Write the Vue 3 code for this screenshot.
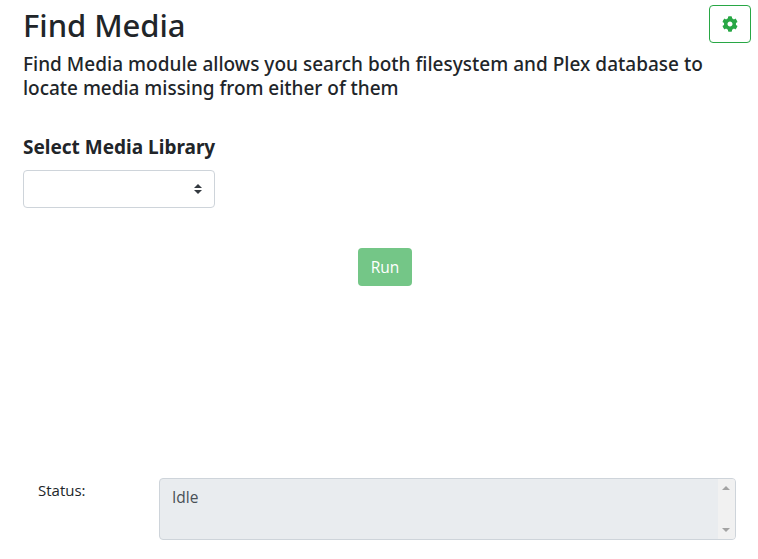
<script setup>
import { ref } from 'vue'
const library = ref('')
const status = ref('Idle')
</script>

<template>
  <main class="page">
    <header class="header">
      <div class="intro">
        <h2>Find Media</h2>
        <h5>Find Media module allows you search both filesystem and Plex database to <span class="ending">locate media missing from either of them</span></h5>
      </div>
      <button class="settings" type="button" aria-label="Settings">
        <svg viewBox="0 0 512 512" width="16" height="16"><path fill="currentColor" d="M487.4 315.7l-42.6-24.6c4.3-23.2 4.3-47 0-70.2l42.6-24.6c4.9-2.8 7.1-8.6 5.5-14-11.1-35.6-30-67.8-54.7-94.6-3.8-4.1-10-5.1-14.8-2.3L380.8 110c-17.9-15.4-38.5-27.3-60.8-35.1V25.8c0-5.6-3.9-10.5-9.4-11.7-36.7-8.2-74.3-7.8-109.2 0-5.5 1.2-9.4 6.1-9.4 11.7V75c-22.2 7.9-42.8 19.8-60.8 35.1L88.7 85.5c-4.9-2.8-11-1.9-14.8 2.3-24.7 26.7-43.6 58.9-54.7 94.6-1.7 5.4.6 11.2 5.5 14L67.3 221c-4.3 23.2-4.3 47 0 70.2l-42.6 24.6c-4.9 2.8-7.1 8.6-5.5 14 11.1 35.6 30 67.8 54.7 94.6 3.8 4.1 10 5.1 14.8 2.3l42.6-24.6c17.9 15.4 38.5 27.3 60.8 35.1v49.2c0 5.6 3.9 10.5 9.4 11.7 36.7 8.2 74.3 7.8 109.2 0 5.5-1.2 9.4-6.1 9.4-11.7v-49.2c22.2-7.9 42.8-19.8 60.8-35.1l42.6 24.6c4.9 2.8 11 1.9 14.8-2.3 24.7-26.7 43.6-58.9 54.7-94.6 1.5-5.5-.7-11.3-5.6-14.1zM256 336c-44.1 0-80-35.9-80-80s35.9-80 80-80 80 35.900 80 80-35.900 80-80 80z"/></svg>
      </button>
    </header>

    <section class="library">
      <label for="library">Select Media Library</label>
      <div class="select-wrap">
        <select id="library" v-model="library"></select>
        <svg class="caret" viewBox="0 0 4 5" width="8" height="10"><path fill="#343a40" d="M2 0L0 2h4zm0 5L0 3h4z"/></svg>
      </div>
    </section>

    <div class="actions"><button class="run" type="button" disabled>Run</button></div>

    <footer class="status-row">
      <span class="status-label">Status:</span>
      <div class="status-box">
        <span class="status-text">{{ status }}</span>
        <div class="scrollbar">
          <svg viewBox="0 0 8 4" width="8" height="4"><path d="M0 4L4 0l4 4z" fill="#a3a3a3"/></svg>
          <svg viewBox="0 0 8 4" width="8" height="4"><path d="M0 0h8L4 4z" fill="#a3a3a3"/></svg>
        </div>
      </div>
    </footer>
  </main>
</template>

<style>
body { margin: 0; background: #fff; overflow: hidden; }
</style>
<style scoped>
* { box-sizing: border-box; }
.page { height: 559px; padding: 5px 7px 0 23px; display: flex; flex-direction: column; color: #212529; font: 15px/24px "Noto Sans", "Open Sans", sans-serif; }
.header { height: 130px; display: flex; justify-content: space-between; align-items: flex-start; }
.intro { width: 684px; flex: none; }
h2, h5 { margin: 0; font-weight: 500; }
h2 { height: 38px; font-size: 31px; line-height: 38px; margin: 1px 0 8px; letter-spacing: -0.05px; }
h5 { font-size: 19px; line-height: 24px; letter-spacing: 0.015px; }
.ending { letter-spacing: -0.025px; }
.settings { flex: none; width: 42px; height: 38px; padding: 0; display: grid; place-items: center; color: #28a745; background: #fff; border: 1px solid #28a745; border-radius: 4px; }
.library { width: 192px; }
label { display: block; height: 35px; font-size: 19px; line-height: 24px; font-weight: 700; white-space: nowrap; }
.select-wrap { display: grid; align-items: center; }
select { grid-area: 1 / 1; appearance: none; width: 192px; height: 38px; background: #fff; border: 1px solid #ced4da; border-radius: 4px; }
.caret { grid-area: 1 / 1; justify-self: end; margin-right: 13px; pointer-events: none; }
.actions { margin-top: 40px; padding-left: 335px; }
.run { width: 54px; height: 38px; padding: 0; display: grid; place-items: center; background: #74c687; color: #fff; border: 0; border-radius: 4px; font: 15.5px/24px "Open Sans", sans-serif; }
.status-row { display: flex; margin-top: 192px; padding-left: 15px; font-family: "Open Sans", sans-serif; }
.status-label { width: 121px; }
.status-box { width: 577px; height: 62px; border: 1px solid #ced4da; border-radius: 4px; background: #e9ecef; display: flex; justify-content: space-between; overflow: hidden; color: #495057; }
.status-text { padding: 6px 12px; font-size: 15.5px; }
.scrollbar { width: 17px; background: #f1f1f1; display: flex; flex-direction: column; align-items: center; justify-content: space-between; padding: 7px 1px 7px 0; }
</style>
